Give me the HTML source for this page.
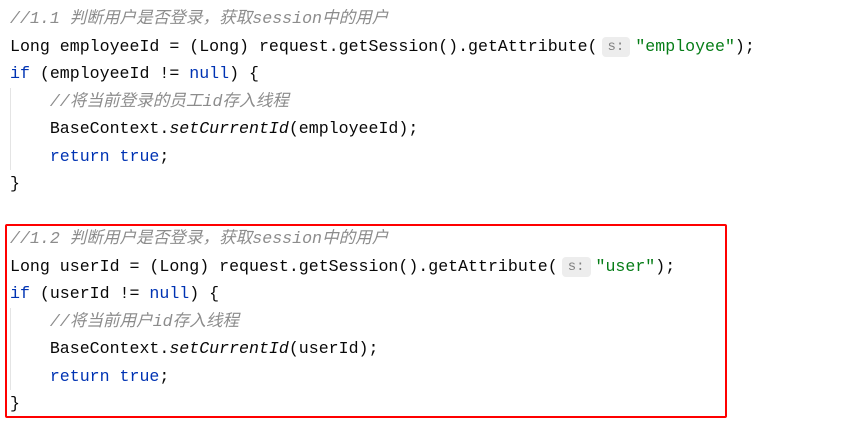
<html><head><style>
body{margin:0;background:#fff;width:866px;height:428px;overflow:hidden;position:relative;font-family:"Liberation Mono","Noto Sans CJK SC",monospace;font-size:16.6px;color:#080808}
.l{position:absolute;left:10px;white-space:pre;height:27px;line-height:27px}
.c{color:#8c8c8c;font-style:italic}
.k{color:#0033b3}
.s{color:#067d17}
.i{font-style:italic}
.h{display:inline-block;background:#ededed;color:#808080;border-radius:4px;font-size:14px;line-height:20px;padding:0 6px;margin:0 5px 0 4px;vertical-align:1px}
.g{position:absolute;left:10px;width:1px;background:#e4e4e4}
.box{position:absolute;left:5px;top:224px;width:718px;height:190px;border:2.5px solid #f00;border-radius:2px}
</style></head><body>
<div class="l c" style="top:5px">//1.1 判断用户是否登录，获取session中的用户</div>
<div class="l" style="top:33px">Long employeeId = (Long) request.getSession().getAttribute(<span class="h">s:</span><span class="s">"employee"</span>);</div>
<div class="l" style="top:60px"><span class="k">if</span> (employeeId != <span class="k">null</span>) {</div>
<div class="g" style="top:88px;height:82px"></div>
<div class="l c" style="top:88px">    //将当前登录的员工id存入线程</div>
<div class="l" style="top:115px">    BaseContext.<span class="i">setCurrentId</span>(employeeId);</div>
<div class="l" style="top:143px">    <span class="k">return true</span>;</div>
<div class="l" style="top:170px">}</div>
<div class="l c" style="top:225px">//1.2 判断用户是否登录，获取session中的用户</div>
<div class="l" style="top:253px">Long userId = (Long) request.getSession().getAttribute(<span class="h">s:</span><span class="s">"user"</span>);</div>
<div class="l" style="top:280px"><span class="k">if</span> (userId != <span class="k">null</span>) {</div>
<div class="g" style="top:308px;height:82px"></div>
<div class="l c" style="top:308px">    //将当前用户id存入线程</div>
<div class="l" style="top:335px">    BaseContext.<span class="i">setCurrentId</span>(userId);</div>
<div class="l" style="top:363px">    <span class="k">return true</span>;</div>
<div class="l" style="top:390px">}</div>
<div class="box"></div>
</body></html>
